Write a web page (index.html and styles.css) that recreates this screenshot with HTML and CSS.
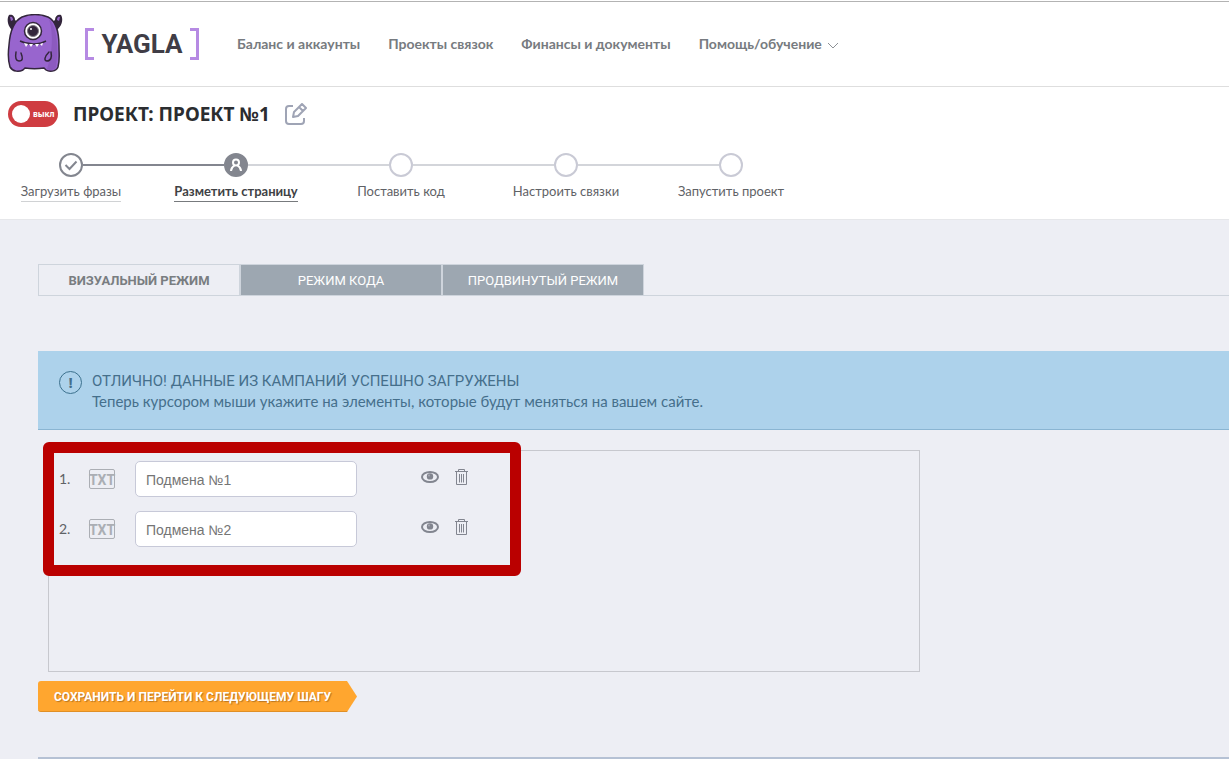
FILE: index.html
```html
<!DOCTYPE html>
<html lang="ru">
<head>
<meta charset="UTF-8">
<meta name="viewport" content="width=device-width, initial-scale=1.0">
<title>YAGLA - Проект №1</title>
<link rel="stylesheet" href="styles.css">
</head>
<body>

<svg class="sprite" aria-hidden="true">
  <symbol id="icon-eye" viewBox="0 0 18 12">
    <ellipse cx="9" cy="6" rx="8" ry="5" fill="none" stroke="currentColor" stroke-width="2"/>
    <circle cx="9" cy="5.4" r="3.2" fill="currentColor"/>
    <circle cx="8" cy="4.4" r="1" fill="#a4a7b0"/>
  </symbol>
  <symbol id="icon-trash" viewBox="0 0 13 16">
    <path d="M0 2.5h13M3.5 2.5v-2h6v2M1.5 3v12.5h10V3M4.5 5v8.5M6.5 5v8.5M8.5 5v8.5" fill="none" stroke="currentColor"/>
  </symbol>
</svg>

<header class="header">
  <a href="#" class="logo">
    <svg class="logo-monster" width="56" height="60" viewBox="0 0 56 60" aria-hidden="true">
      <path d="M4 15C0 10 0 4 2 1c3-1 6 1 6 5 2 2 4 2 6 2L7 18zM51 15c5-5 5-11 3-14-3-1-6 1-6 5-2 2-4 2-6 2l6 10z" fill="#33263c"/>
      <path d="M3 3c2-1 3 1 3 3L4 7zM53 3c-2-1-3 1-3 3l2 1z" fill="#9462c6"/>
      <path d="M15 3C23 0 33 0 41 3c8 4 11 16 11 29 0 9 1 14-1 21-2 5-9 5-12 3l-2-2c-6 1-13 1-19 0l-2 2c-4 2-10 2-13-3-2-6-2-14-1-22C3 17 7 7 15 3z" fill="#9865ce" stroke="#33263c" stroke-width="1.5"/>
      <path d="M42 5c8 8 10 29 7 48-1 3-6 4-9 2 5-14 7-34 2-50z" fill="#8c5abf"/>
      <circle cx="26" cy="17" r="8.5" fill="#fff" stroke="#33263c" stroke-width="1.5"/>
      <circle cx="26" cy="17" r="5.5" fill="#33263c" stroke="#817b85"/>
      <circle cx="24" cy="15" r="1" fill="#fff"/>
      <path d="M13 27c8 4 19 4 26 0" fill="none" stroke="#33263c" stroke-width="1.5"/>
      <path d="M17 29l4 1-2 3zM22 30h4l-2 3zM28 30h4l-2 3zM33 30l3-1-1 3z" fill="#fff"/>
      <path d="M9 38c-1 6 0 9 3 9 4 0 4-3 2-8M42 38c-5 5-5 9-2 9 4 0 5-4 4-9" fill="none" stroke="#33263c" stroke-width="1.5" stroke-linecap="round"/>
    </svg>
    <span class="logo-text">YAGLA</span>
  </a>
  <nav class="nav">
    <a href="#">Баланс и аккаунты</a>
    <a href="#">Проекты связок</a>
    <a href="#">Финансы и документы</a>
    <a href="#">Помощь/обучение
      <svg width="12" height="7" viewBox="0 0 12 7" aria-hidden="true"><path d="M1 1l5 5 5-5" fill="none" stroke="#8d9196"/></svg>
    </a>
  </nav>
</header>

<section class="project">
  <div class="project-title">
    <label class="toggle">
      <input type="checkbox" aria-label="Включить проект">
      <span class="toggle-text">выкл</span>
    </label>
    <h1>ПРОЕКТ: ПРОЕКТ №1</h1>
    <button class="icon-button" aria-label="Переименовать проект">
      <svg width="22" height="22" viewBox="0 0 22 22" aria-hidden="true">
        <g fill="none" stroke="#9fa4b5" stroke-width="2" stroke-linejoin="round">
          <path d="M8 3H4C2 3 1 4 1 6v12c0 2 1 3 3 3h12c2 0 3-1 3-3v-3"/>
          <path d="M8 14l1-5 8-8 4 4-8 8zM14 4l4 4"/>
        </g>
      </svg>
    </button>
  </div>
  <ol class="steps">
    <li class="step done">
      <span class="step-dot"><svg width="14" height="12" viewBox="0 0 14 12" aria-hidden="true"><path d="M1.5 6l4 4 7-7.5" fill="none" stroke="#83868f" stroke-width="2"/></svg></span>
      <a href="#">Загрузить фразы</a>
    </li>
    <li class="step active">
      <span class="step-dot"><svg width="12" height="14" viewBox="0 0 12 14" aria-hidden="true"><circle cx="6" cy="4.5" r="3" fill="none" stroke="#fff" stroke-width="2"/><path d="M1 13c0-3 1-4 3.500-5.500M11 13c0-3-1-4-3.500-5.500" fill="none" stroke="#fff" stroke-width="2"/></svg></span>
      <a href="#">Разметить страницу</a>
    </li>
    <li class="step"><span class="step-dot"></span><span>Поставить код</span></li>
    <li class="step"><span class="step-dot"></span><span>Настроить связки</span></li>
    <li class="step"><span class="step-dot"></span><span>Запустить проект</span></li>
  </ol>
</section>

<main class="content">
  <div class="tabs">
    <button class="tab current">ВИЗУАЛЬНЫЙ РЕЖИМ</button>
    <button class="tab">РЕЖИМ КОДА</button>
    <button class="tab">ПРОДВИНУТЫЙ РЕЖИМ</button>
  </div>

  <div class="alert">
    <span class="alert-icon">!</span>
    <div>
      <p class="alert-title">ОТЛИЧНО! ДАННЫЕ ИЗ КАМПАНИЙ УСПЕШНО ЗАГРУЖЕНЫ</p>
      <p>Теперь курсором мыши укажите на элементы, которые будут меняться на вашем сайте.</p>
    </div>
  </div>

  <div class="panel">
    <div class="row">
      <label for="swap1">1.</label>
      <span class="txt">TXT</span>
      <input type="text" id="swap1" placeholder="Подмена №1">
      <button class="icon-button" aria-label="Показать"><svg width="18" height="12"><use href="#icon-eye"/></svg></button>
      <button class="icon-button" aria-label="Удалить"><svg width="13" height="16"><use href="#icon-trash"/></svg></button>
    </div>
    <div class="row">
      <label for="swap2">2.</label>
      <span class="txt">TXT</span>
      <input type="text" id="swap2" placeholder="Подмена №2">
      <button class="icon-button" aria-label="Показать"><svg width="18" height="12"><use href="#icon-eye"/></svg></button>
      <button class="icon-button" aria-label="Удалить"><svg width="13" height="16"><use href="#icon-trash"/></svg></button>
    </div>
    <div class="highlight"></div>
  </div>

  <button class="next">СОХРАНИТЬ И ПЕРЕЙТИ К СЛЕДУЮЩЕМУ ШАГУ</button>
  <hr class="divider">
</main>

</body>
</html>
```

FILE: styles.css
```css
*,
*::before,
*::after {
  box-sizing: border-box;
}
body {
  margin: 0;
  padding-top: 1px;
  background: #fff;
  color: #5f6266;
  font-family: Lato, "Noto Sans", sans-serif;
  font-size: 13px;
  line-height: 20px;
}
button {
  font-family: Roboto, sans-serif;
  cursor: pointer;
}
a {
  color: inherit;
  text-decoration: none;
}
.sprite {
  display: none;
}
.icon-button {
  display: flex;
  padding: 0;
  border: 0;
  background: none;
  color: #82858f;
}

/* Header */
.header {
  display: flex;
  align-items: center;
  gap: 38px;
  height: 86px;
  padding-left: 7px;
  border-top: 1px solid #b3b3b3;
  border-bottom: 1px solid #dedede;
}
.logo {
  display: flex;
  align-items: center;
  gap: 22px;
}
.logo-text {
  position: relative;
  width: 114px;
  color: #403d46;
  font-family: Roboto, sans-serif;
  font-size: 26px;
  font-weight: bold;
  line-height: 32px;
  text-align: center;
}
.logo-text::before,
.logo-text::after {
  content: "";
  position: absolute;
  top: 0;
  left: 0;
  width: 9px;
  height: 32px;
  border: 3px solid #b68ae3;
  border-right: 0;
}
.logo-text::after {
  left: auto;
  right: 0;
  border-right: 3px solid #b68ae3;
  border-left: 0;
}
.nav {
  display: flex;
  gap: 28px;
  color: #777b80;
  font-size: 14px;
  font-weight: bold;
}
.nav svg {
  margin-left: 2px;
}

/* Project title and steps */
.project {
  height: 132px;
  padding: 12px 8px 0;
}
.project-title {
  display: flex;
  align-items: center;
  gap: 15px;
  height: 30px;
}
.project-title h1 {
  margin: 0;
  color: #2b2d30;
  font-family: "Noto Sans", sans-serif;
  font-size: 19px;
}
.toggle {
  display: flex;
  align-items: center;
  gap: 3px;
  width: 50px;
  height: 26px;
  padding-left: 4px;
  border-radius: 13px;
  background: #cf3c41;
  cursor: pointer;
}
.toggle input {
  appearance: none;
  width: 18px;
  height: 18px;
  margin: 0;
  border-radius: 50%;
  background: #fff;
}
.toggle-text {
  color: #fff;
  font-family: "Noto Sans", sans-serif;
  font-size: 8px;
  font-weight: bold;
}
.steps {
  display: flex;
  gap: 39px;
  margin: 24px 0 0;
  padding: 0;
  list-style: none;
}
.step {
  position: relative;
  display: flex;
  flex-direction: column;
  align-items: center;
  gap: 4px;
  width: 126px;
  white-space: nowrap;
}
.step + .step::before {
  content: "";
  position: absolute;
  top: 11px;
  right: 75px;
  width: 141px;
  height: 2px;
  background: #d3d5da;
}
.step.step.active::before {
  background: #83868f;
}
.step-dot {
  display: flex;
  align-items: center;
  justify-content: center;
  width: 24px;
  height: 24px;
  border: 2px solid #c9cad5;
  border-radius: 50%;
}
.step.done .step-dot {
  border-color: #83868f;
}
.step.active .step-dot {
  border-color: #83868f;
  background: #83868f;
}
.step a {
  border-bottom: 1px solid #d0d2d4;
}
.step.active a {
  border-color: #777a7d;
  color: #3f4245;
  font-weight: bold;
}

/* Content */
.content {
  padding: 44px 0 0 38px;
  border-top: 1px solid #e6e7ea;
  background: #edeef4;
}
.tabs {
  display: flex;
  height: 32px;
  border-bottom: 1px solid #ced4dc;
}
.tab {
  width: 202px;
  height: 32px;
  padding: 0;
  border: 1px solid #ced4dc;
  background: #9da7b1;
  color: #fff;
  font-size: 13px;
}
.tab.current {
  background: #edeef4;
  color: #797d81;
  font-weight: bold;
}
.alert {
  display: flex;
  gap: 10px;
  margin-top: 55px;
  padding: 20px 21px 18px;
  border-bottom: 1px solid #8ab5d2;
  background: #add2eb;
  color: #456f8b;
  font-size: 15px;
}
.alert p {
  margin: 0;
}
.alert-title {
  font-family: Roboto, sans-serif;
}
.alert-icon {
  width: 23px;
  height: 23px;
  border: 1px solid #3c718e;
  border-radius: 50%;
  font-family: "Noto Sans", sans-serif;
  font-weight: bold;
  text-align: center;
}
.panel {
  position: relative;
  max-width: 872px;
  min-height: 222px;
  margin: 20px 10px 0;
  padding: 10px;
  border: 1px solid #c7c8ce;
}
.row {
  display: grid;
  grid-template-columns: 30px 46px 222px 64px 34px 13px;
  align-items: center;
  margin-bottom: 14px;
}
.row label {
  font-size: 14px;
}
.row .icon-button {
  margin-bottom: 4px;
}
.row .icon-button:nth-of-type(1) {
  grid-column: 5;
}
.txt {
  display: flex;
  justify-content: center;
  width: 26px;
  height: 20px;
  border: 1px solid #abaeb4;
  border-radius: 2px;
  color: #abaeb4;
  font: bold 14px/20px Roboto, sans-serif;
}
.row input {
  height: 36px;
  padding: 2px 10px 0;
  border: 1px solid #c7c9d8;
  border-radius: 5px;
  background: #fff;
  font: 14px "Liberation Sans", sans-serif;
}
.row input::placeholder {
  color: #757575;
}
.highlight {
  position: absolute;
  top: -9px;
  left: -6px;
  width: 478px;
  height: 134px;
  border: 11px solid #ba0000;
  border-radius: 6px;
  pointer-events: none;
}
.next {
  display: block;
  width: 319px;
  height: 31px;
  margin-top: 9px;
  padding: 2px 10px 0 0;
  border: 0;
  border-bottom: 1px solid #e08f25;
  border-radius: 3px;
  background: #ffa62f;
  clip-path: polygon(0 0, 309px 0, 100% 50%, 309px 100%, 0 100%);
  color: #fff;
  font-size: 12px;
  font-weight: bold;
  text-shadow: 1px 1px 1px #b87522;
}
.divider {
  height: 2px;
  margin: 45px 0 0;
  border: 0;
  background: #b5c1d4;
}
```
